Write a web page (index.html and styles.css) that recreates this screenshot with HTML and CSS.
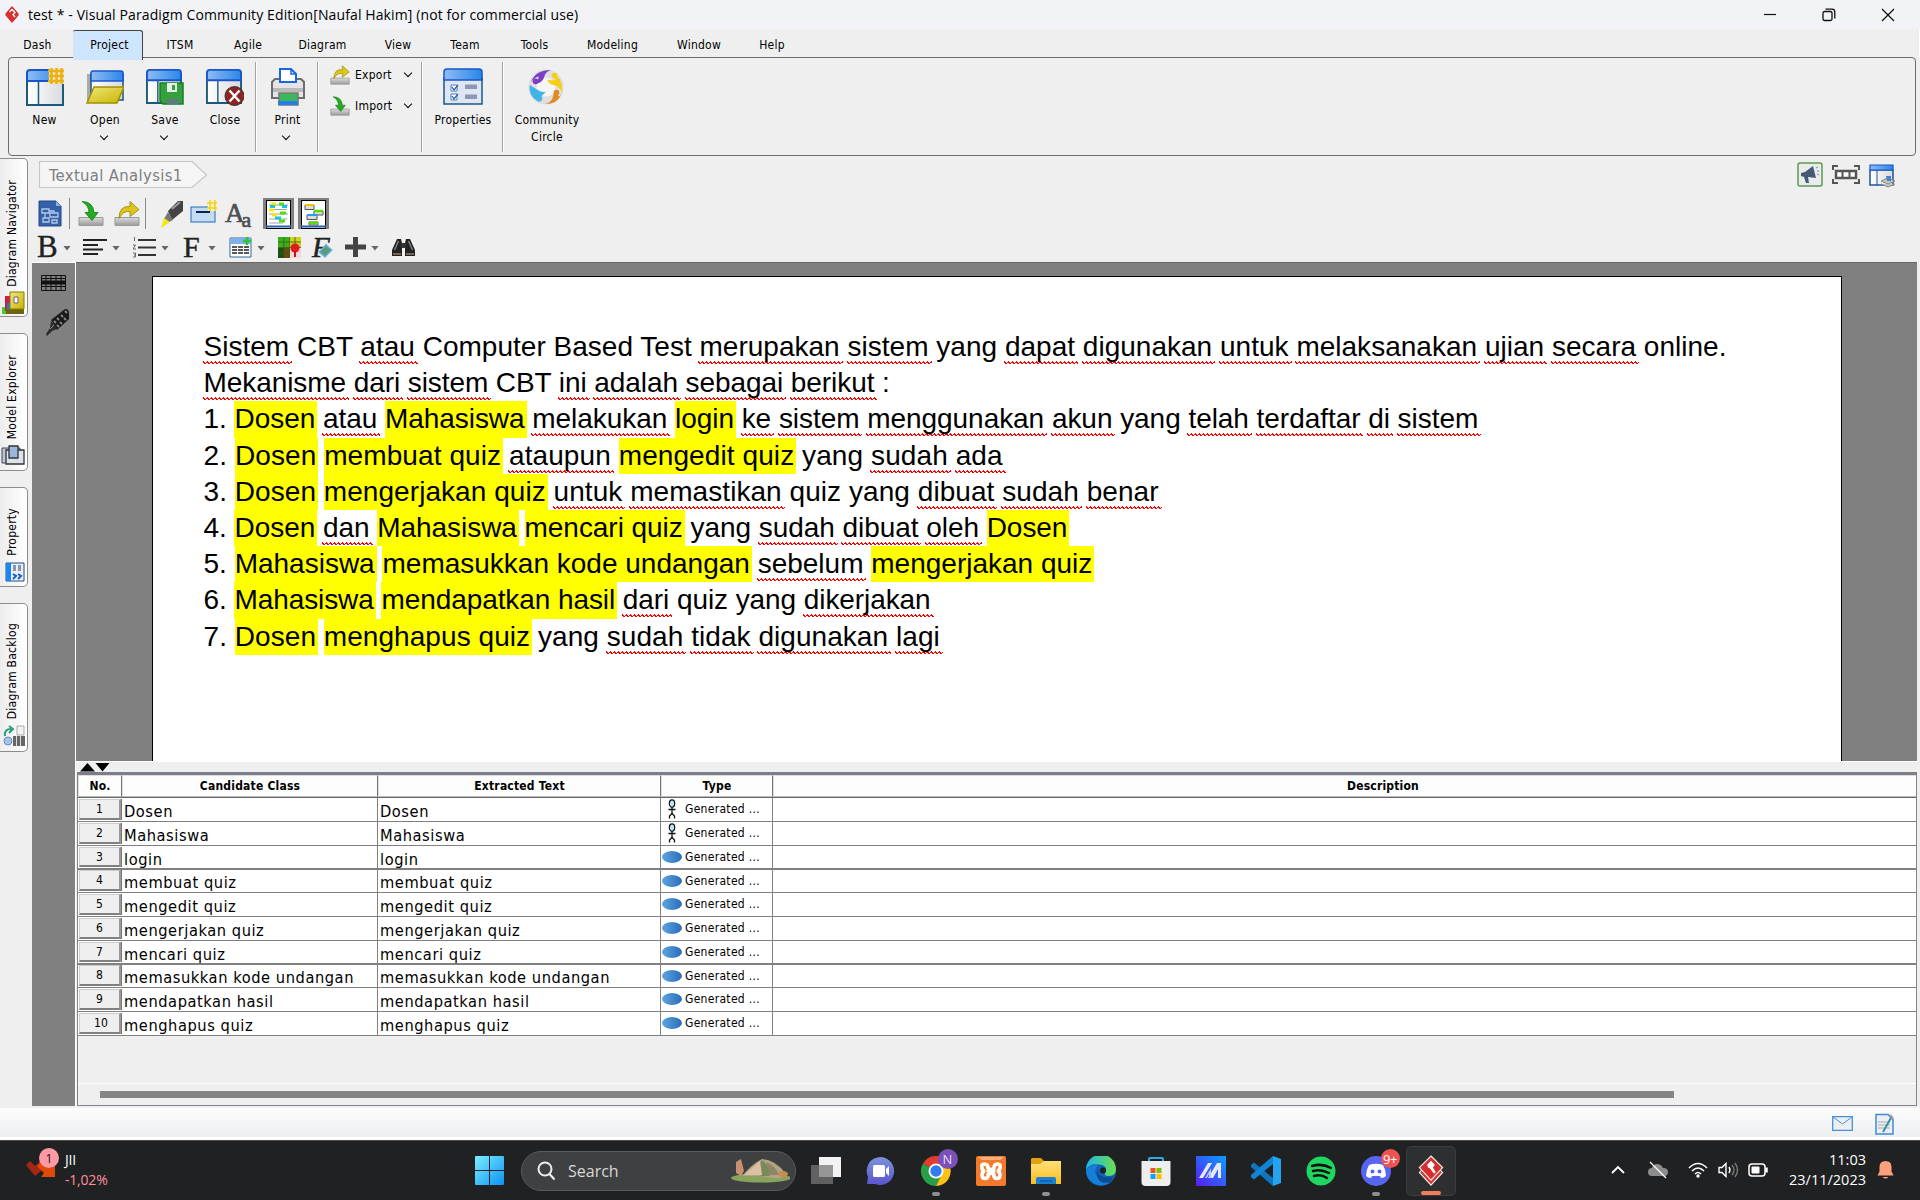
FILE: index.html
```html
<!DOCTYPE html>
<html lang="en">
<head>
<meta charset="utf-8">
<title>test * - Visual Paradigm Community Edition</title>
<link rel="stylesheet" href="styles.css">
</head>
<body>
<svg class="defs" width="0" height="0" aria-hidden="true">
  <defs>
    <linearGradient id="blueBar" x1="0" y1="0" x2="1" y2="0"><stop offset="0" stop-color="#8fbcf3"/><stop offset="1" stop-color="#2a86ea"/></linearGradient>
    <linearGradient id="paper" x1="0" y1="0" x2="1" y2="0"><stop offset="0" stop-color="#fff"/><stop offset="1" stop-color="#d9dadf"/></linearGradient>
    <linearGradient id="gold" x1="0" y1="0" x2="1" y2="1"><stop offset="0" stop-color="#f0e67c"/><stop offset="1" stop-color="#c9b400"/></linearGradient>
    <linearGradient id="tray" x1="0" y1="0" x2="0" y2="1"><stop offset="0" stop-color="#ddd"/><stop offset="1" stop-color="#999"/></linearGradient>
    <linearGradient id="oval" x1="0" y1="0" x2="1" y2="0"><stop offset="0" stop-color="#5ea4e0"/><stop offset="1" stop-color="#2a6db8"/></linearGradient>
    <linearGradient id="win" x1="0" y1="0" x2="1" y2="1"><stop offset="0" stop-color="#7ceeff"/><stop offset="1" stop-color="#0a92f5"/></linearGradient>
    <linearGradient id="edge" x1="0" y1="0" x2="1" y2="0"><stop offset="0" stop-color="#1fb4e6"/><stop offset="1" stop-color="#6be04c"/></linearGradient>
    <linearGradient id="asus" x1="1" y1="0" x2="0" y2="1"><stop offset="0" stop-color="#0aa0ff"/><stop offset="1" stop-color="#5a1bf5"/></linearGradient>
    <linearGradient id="chat" x1="0" y1="0" x2="0" y2="1"><stop offset="0" stop-color="#7d92dc"/><stop offset="1" stop-color="#5a55cf"/></linearGradient>
    <linearGradient id="folder" x1="0" y1="0" x2="0" y2="1"><stop offset="0" stop-color="#ffe07a"/><stop offset="1" stop-color="#fbbd1c"/></linearGradient>
    <symbol id="window" viewBox="0 0 38 38"><path d="M1 12h36v25H1z" fill="url(#paper)" stroke="#1a5a78" stroke-width="2"/><path d="M12.500 12v25" stroke="#1a5a78" stroke-width="1.500"/><path d="M1 13V5q0-3 3-3h30q3 0 3 3v8z" fill="url(#blueBar)" stroke="#1a55c8" stroke-width="2"/></symbol>
    <symbol id="importIcon" viewBox="0 0 26 26"><path d="M1 17h24v8H1z" fill="url(#tray)" stroke="#999"/><path d="M4 1q11 0 12 11h4l-6 8-7-8h4Q11 5 4 1z" fill="#25ad22" stroke="#167a14" stroke-width=".8"/></symbol>
    <symbol id="exportIcon" viewBox="0 0 26 26"><path d="M1 17h24v8H1z" fill="url(#tray)" stroke="#999"/><path d="M5 18Q5 5 16 6V1l9 8-9 7v-5q-7-1-11 7z" fill="#dcc51c" stroke="#9a8500" stroke-width=".8"/></symbol>
    <symbol id="actor" viewBox="0 0 10 20"><ellipse cx="5" cy="4.500" rx="2.700" ry="3.700" fill="#bfe6f5" stroke="#111" stroke-width="1.200"/><path d="M5 8v6.500M1.500 10.500h7M5 14.500l-2.500 2.500v2.500M5 14.500L7.500 17v2.500" fill="none" stroke="#111" stroke-width="1.300"/></symbol>
    <symbol id="usecase" viewBox="0 0 20 12"><ellipse cx="10" cy="6" rx="10" ry="6" fill="url(#oval)"/></symbol>
    <symbol id="vp" viewBox="0 0 26 32"><path d="M13 6l12 12-12 13L1 18z" fill="#d33" stroke="#eee" stroke-width="1.200"/><path d="M13 1l12 12-12 13L1 13z" fill="#d32f2f" stroke="#eee" stroke-width="1.200"/><path d="M9 10l4-4 4 4-2 3 3 5-2 1-4-5-2-1z" fill="#fff"/></symbol>
  </defs>
</svg>

<header class="titlebar">
  <svg class="app-icon" viewBox="0 0 14 17" width="14" height="17"><path d="M7 0l6.500 7.500v2L7 17 .5 9.500v-2z" fill="#d63030"/><path d="M4.500 6L7 3.500 10 6.500 8 8.500l2 2.500" fill="none" stroke="#fff" stroke-width="1.300"/></svg>
  <h1 class="app-title">test * - Visual Paradigm Community Edition[Naufal Hakim] (not for commercial use)</h1>
  <div class="window-buttons">
    <svg width="14" height="14" viewBox="0 0 14 14"><path d="M1 6.500h12" stroke="#111" stroke-width="1.200"/></svg>
    <svg width="14" height="14" viewBox="0 0 14 14" fill="none" stroke="#111" stroke-width="1.300"><rect x="1" y="3.500" width="9" height="9" rx="1.500"/><path d="M3.500 1.200H10q2.800 0 2.800 2.800v6.500"/></svg>
    <svg width="14" height="14" viewBox="0 0 14 14"><path d="M1 1l12 12M13 1L1 13" stroke="#111" stroke-width="1.300"/></svg>
  </div>
</header>

<nav class="menu">
  <span>Dash</span><span class="active">Project</span><span>ITSM</span><span>Agile</span><span>Diagram</span><span>View</span><span>Team</span><span>Tools</span><span>Modeling</span><span>Window</span><span>Help</span>
</nav>

<section class="ribbon">
  <div class="tool tool-new">
    <svg width="38" height="38" viewBox="0 0 38 38"><use href="#window" width="38" height="38"/><path d="M23 0h15v16H23z" fill="#f6e9b8"/><path d="M25.500 0v16M30.500 0v16M35.500 0v16M22 3h16M22 8h16M22 13h16" stroke="#eab01c" stroke-width="2.500"/></svg>
    <span>New</span>
  </div>
  <div class="tool">
    <svg width="38" height="38" viewBox="0 0 38 38"><path d="M1 6h4v28H1z" fill="#aaa"/><path d="M5 6h32v26H5z" fill="url(#paper)" stroke="#1a5a78" stroke-width="1.500"/><path d="M5 13V5q0-2 2-2h28q2 0 2 2v8z" fill="url(#blueBar)" stroke="#1a55c8" stroke-width="1.500"/><path d="M8 19h30l-7 16H1z" fill="url(#gold)" stroke="#a09000" stroke-width="1.500"/></svg>
    <span>Open</span><i class="chevron"></i>
  </div>
  <div class="tool">
    <svg width="38" height="38" viewBox="0 0 38 38"><use href="#window" width="36" height="36"/><path d="M14 15h23v21H17l-3-3z" fill="#35a03e" stroke="#12801f" stroke-width="1.500"/><path d="M21 15h10v9H21z" fill="#e6f3e6"/><path d="M26 17h3v5h-3z" fill="#35a03e"/><path d="M21 31h12v5H21z" fill="#5d7a80"/></svg>
    <span>Save</span><i class="chevron"></i>
  </div>
  <div class="tool">
    <svg width="38" height="38" viewBox="0 0 38 38"><use href="#window" width="36" height="36"/><circle cx="28.500" cy="28" r="9.500" fill="#8c2424" stroke="#333" stroke-width="1"/><path d="M23.500 22.500l10 11M33.500 22.500l-10 11" stroke="#fff" stroke-width="2.500"/></svg>
    <span>Close</span>
  </div>
  <i class="divider"></i>
  <div class="tool">
    <svg width="36" height="38" viewBox="0 0 36 38"><path d="M2 14l3-3h26l3 3v16H2z" fill="#e4e4e6" stroke="#6d6d70" stroke-width="2"/><path d="M3 20h30v4H3z" fill="#b9b9b9"/><path d="M10 14V1h11l5 5v8z" fill="#fff" stroke="#1a66e0" stroke-width="2"/><path d="M21 1v5h5" fill="none" stroke="#1a66e0" stroke-width="1.500"/><path d="M9 25h19v12H9z" fill="#3cb85a" stroke="#777" stroke-width="1.500"/><path d="M8 33h20v4H8z" fill="#2a7be8"/></svg>
    <span>Print</span><i class="chevron"></i>
  </div>
  <i class="divider"></i>
  <div class="tool-pair">
    <div><svg width="20" height="20"><use href="#exportIcon" width="20" height="20"/></svg><span>Export</span><i class="chevron"></i></div>
    <div><svg width="20" height="20"><use href="#importIcon" width="20" height="20"/></svg><span>Import</span><i class="chevron"></i></div>
  </div>
  <i class="divider"></i>
  <div class="tool tool-props">
    <svg width="40" height="38" viewBox="0 0 40 38"><path d="M1 10h38v26H1z" fill="#dfe6f3" stroke="#1a5a88" stroke-width="1.500"/><path d="M1 12V4q0-3 3-3h32q3 0 3 3v8z" fill="url(#blueBar)" stroke="#1a55c8" stroke-width="1.500"/><path d="M8 17h6v6H8zM8 26h6v6H8z" fill="#fff" stroke="#4a80c8"/><path d="M9 19l2 3 4-5M9 28l2 3 4-5" fill="none" stroke="#335f9c" stroke-width="1.300"/><path d="M22 16.500h12v4.500H22zM22 26.500h12V31H22z" fill="#8b97b5"/></svg>
    <span>Properties</span>
  </div>
  <i class="divider"></i>
  <div class="tool tool-community">
    <svg width="38" height="38" viewBox="0 0 38 40"><circle cx="19" cy="20" r="18.500" fill="#dfdfdf"/><circle cx="19" cy="20" r="10" fill="#f6f6f6"/><path d="M3 15Q8 2 24 2q-6 2-7 8-3 7-9 6 4-4 3-7-4 1-8 6z" fill="#7a3fc4"/><circle cx="8" cy="14" r="3" fill="#7a3fc4"/><path d="M24 6q13 2 12 20-3-7-9-8-5-1-7-6 7 2 9 0 0-3-5-6z" fill="#f5cf14"/><circle cx="28" cy="8" r="3" fill="#f5cf14"/><path d="M35 28q-4 10-17 10 8-3 8-7 1-6 6-7-1 5 0 6 1 0 3-2z" fill="#e08a22"/><circle cx="30" cy="26" r="3" fill="#e08a22"/><path d="M2 18q-2 12 10 18-2-4 3-7l4-4q-6 1-9-2-5-3-8-5z" fill="#41b4e6"/><circle cx="12" cy="32" r="3" fill="#41b4e6"/></svg>
    <span>Community<br>Circle</span>
  </div>
</section>

<main class="workspace">
  <aside class="side-tabs">
    <div class="side-tab navigator"><span>Diagram Navigator</span>
      <svg width="24" height="24" viewBox="0 0 24 24"><path d="M1 16h5v7H1z" fill="#3fd02c"/><path d="M4 5h6v15H4z" fill="#d11b4a"/><path d="M6 12h4v9H6z" fill="#1f7bd0"/><path d="M5 18h18v5H5z" fill="#6f6410"/><path d="M9 1h14v17H9z" fill="url(#gold)" stroke="#8c7c00"/><path d="M13 6h4v6h-4z" fill="#fff" stroke="#668"/></svg></div>
    <div class="side-tab explorer"><span>Model Explorer</span>
      <svg width="24" height="20" viewBox="0 0 24 20"><path d="M1 3h18v15H1z" fill="#b9c6d6" stroke="#445"/><path d="M5 5h18v14H5z" fill="#dde3ea" stroke="#333" stroke-width="1.300"/><path d="M8 1h9v12H8z" fill="#9bb7de" stroke="#333" stroke-width="1.300"/></svg></div>
    <div class="side-tab property"><span>Property</span>
      <svg width="20" height="20" viewBox="0 0 20 20"><path d="M1 1h18v18H1z" fill="#e9eef6" stroke="#234a8a"/><path d="M1 1h5v18H1z" fill="#1e86f0"/><path d="M8 3h3v6H8zM13 3h3v6h-3z" fill="#8b97a8"/><path d="M8 12l3 2-3 3M13 12l3 2-3 3" fill="none" stroke="#1a5fc0" stroke-width="2"/></svg></div>
    <div class="side-tab backlog"><span>Diagram Backlog</span>
      <svg width="22" height="22" viewBox="0 0 22 22"><path d="M14 1h7v9h-7z" fill="#f2f2f2" stroke="#aaa"/><path d="M10 11h12v10H10z" fill="#666"/><path d="M13.500 11v10M17.500 11v10" stroke="#ddd"/><circle cx="5" cy="16" r="4" fill="#a9c2e8" stroke="#6a8cc0"/><path d="M2 11q-1-7 6-7M6 1l4 3-4 4" fill="none" stroke="#2a9d80" stroke-width="2"/></svg></div>
  </aside>

  <div class="editor">
    <div class="crumbs">
      <div class="crumb"><svg width="169" height="28" viewBox="0 0 169 28"><path d="M.5.500H153l14.500 13.500L153 26.500H.5z" fill="#f5f5f5" stroke="#c4c6c9" stroke-width="1.200"/></svg><span>Textual Analysis1</span></div>
      <div class="crumb-actions">
        <svg width="26" height="26" viewBox="0 0 26 26"><rect x="1" y="1" width="24" height="23" rx="2" fill="#e9ebec" stroke="#5a9c50" stroke-width="1.500"/><path d="M4 11l4-1 8-6 3 12-8-1 1 6h-3l-2-6-3-1z" fill="#465a78"/><path d="M19 6l2-1M20 9h2M20 12l2 1" stroke="#889"/></svg>
        <svg width="28" height="26" viewBox="0 0 28 26" fill="none" stroke="#555"><path d="M1 8V4h5M22 4h5v4M1 17v4h5M22 21h5v-4" stroke-width="2"/><path d="M4 9h20v7H4z" stroke-width="2.500" fill="#fff"/><path d="M10.500 9v7M17.500 9v7" stroke-width="2"/></svg>
        <svg width="27" height="26" viewBox="0 0 27 26"><path d="M1 8h23v15H1z" fill="url(#paper)" stroke="#1a5a98" stroke-width="1.500"/><path d="M8 8v15" stroke="#1a5a98"/><path d="M1 3h23v5H1z" fill="url(#blueBar)" stroke="#1a55c8" stroke-width="1.200"/><path d="M12 19l7 3 7-3-7-3zM12 22l7 3 7-3" fill="#c4c6ca" stroke="#888"/><path d="M17 14h5v5h-4z" fill="#4a80c8"/></svg>
      </div>
    </div>

    <div class="toolbar first">
      <svg class="i-doc" width="24" height="28" viewBox="0 0 24 28"><path d="M1 1h17l5 5v20H1z" fill="#3460a8" stroke="#22488a"/><path d="M18 1v5h5" fill="#8fb0e0"/><path d="M4 9h7v4H4zM12 13h8v4h-8zM5 18h6v4H5zM14 20h5v3h-5zM7 13v5M11 11h5v2" fill="none" stroke="#b4c9ea" stroke-width="1.300"/></svg>
      <i class="divider"></i>
      <svg class="i-import" width="26" height="27"><use href="#importIcon" width="26" height="27"/></svg>
      <svg class="i-export" width="26" height="27"><use href="#exportIcon" width="26" height="27"/></svg>
      <i class="divider"></i>
      <svg class="i-marker" width="23" height="28" viewBox="0 0 23 28"><path d="M8 11L18 1h5v10L12 20z" fill="#444"/><path d="M12 9l8-7" stroke="#999" stroke-width="2"/><path d="M8 12l5 8-6 3-3-4z" fill="#777"/><path d="M4 18l6 4-9 6z" fill="#f0e810"/></svg>
      <svg class="i-newbox" width="27" height="28" viewBox="0 0 27 28"><rect x="1" y="7" width="24" height="15" fill="#c4dbf5" stroke="#3f7cc4" stroke-width="1.200"/><path d="M6 12h14" stroke="#124" stroke-width="2"/><path d="M18 1h9v10h-9z" fill="#fff3a8"/><path d="M20 0v11M25 0v11M17 3h10M17 8h10" stroke="#f0cf30" stroke-width="1.500"/></svg>
      <span class="i-aa">A<small>a</small></span>
      <div class="toggle"><svg width="25" height="29" viewBox="0 0 25 29"><path d="M0 0h25v29H0z" fill="#fff" stroke="#000" stroke-width="2"/><path d="M3 5h19M3 9.500h18M3 14h19M3 19h18M3 23h14" stroke="#9da2b0" stroke-width="1.200"/><path d="M5 4h5M3 10h5M6 15h5" stroke="#ffe600" stroke-width="3"/><path d="M13 4h5M14 13h6M13 21h6" stroke="#50e000" stroke-width="3"/><path d="M4 6.500h5M16 6.500h5M9 18h6" stroke="#18c0f0" stroke-width="3"/><path d="M0 26.500h25" stroke="#2a5fb0" stroke-width="2"/></svg></div>
      <div class="toggle"><svg width="25" height="29" viewBox="0 0 25 29"><path d="M0 0h25v29H0z" fill="#fff" stroke="#000" stroke-width="2"/><path d="M4 5h9v4.500H4zM13 11h9v4h-9zM6 15h10v4.500H6zM8 22h9v3H8z" fill="#ddd" stroke="#555"/><path d="M4 5h9" stroke="#f0c000" stroke-width="2"/><path d="M13 11h9M8 23h9" stroke="#50e000" stroke-width="2.500"/><path d="M6 15h10" stroke="#2a9cf0" stroke-width="2"/><path d="M0 26.500h25" stroke="#2a5fb0" stroke-width="2"/></svg></div>
    </div>

    <div class="toolbar second">
      <b class="glyph bold-b">B</b><i class="drop"></i>
      <svg class="i-align" width="24" height="20" viewBox="0 0 24 20"><path d="M0 3h24M0 8h15M0 12.500h20M0 17h15" stroke="#222" stroke-width="1.800"/></svg><i class="drop"></i>
      <svg class="i-list" width="23" height="22" viewBox="0 0 23 22"><path d="M5 4h18M5 11.500h18M5 19h18" stroke="#333" stroke-width="1.800"/><path d="M1.500 1v4M0 9h2.500L0 13h3M0 17h2.500v4H0M1 19h2" stroke="#666" fill="none"/></svg><i class="drop"></i>
      <b class="glyph letter-f">F</b><i class="drop"></i>
      <svg class="i-table" width="23" height="21" viewBox="0 0 23 21"><path d="M1 1h21v19H1z" fill="#fff" stroke="#2f6c9c"/><path d="M1 1h21v6H1z" fill="#7fb0ea"/><path d="M3 10h5M9 10h5M15 10h5M3 13h5M9 13h5M15 13h5M3 16h5M9 16h5M15 16h5" stroke="#222" stroke-width="1.600"/><path d="M18 0v8M14 4h8" stroke="#2fc43a" stroke-width="2.500"/></svg><i class="drop"></i>
      <svg class="i-grid" width="23" height="21" viewBox="0 0 23 21"><path d="M0 0h23v21H0z" fill="#38b01c"/><path d="M11 0h12v11H11z" fill="#cfd21c"/><path d="M0 11h6v10H0z" fill="#1f4c10"/><path d="M6 11h6v10H6z" fill="#6b4a10"/><path d="M5.800 0v21M11.500 0v21M17 0v21M0 5h23M0 10.500h23M0 16h23" stroke="#3a5a18" stroke-width=".8"/><path d="M12 11h11v10H12z" fill="#f3dada"/><circle cx="17" cy="11" r="4.500" fill="#dd1c1c"/><path d="M17 14v6" stroke="#c01818" stroke-width="2"/></svg>
      <div class="i-eraser"><i>F</i><svg width="15" height="14" viewBox="0 0 15 14"><path d="M1 8l7-7 6 5-7 7z" fill="#5b9a7c" stroke="#6fb6e6" stroke-width="1.300"/></svg></div>
      <svg class="i-plus" width="21" height="20" viewBox="0 0 21 20"><path d="M8 0h5v7.500h8v5h-8V20H8v-7.500H0v-5h8z" fill="#444"/></svg><i class="drop"></i>
      <svg class="i-bino" width="23" height="20" viewBox="0 0 23 20"><path d="M0 19V13L5 2h4l1 4v13zM23 19V13L18 2h-4l-1 4v13z" fill="#222"/><path d="M9 6h5v5H9z" fill="#333"/><path d="M2.500 13l4-9M20.500 13l-4-9" stroke="#888" stroke-width="1.300"/><path d="M1 17h8M14 17h8" stroke="#c8a888"/></svg>
    </div>

    <div class="stage">
      <div class="palette">
        <svg width="25" height="16" viewBox="0 0 25 16"><path d="M.5.500h24v15H.5zM5 .5v15M10 .5v15M15 .5v15M20 .5v15M.5 3.500h24M.5 11.500h24" fill="none" stroke="#111"/><path d="M0 5.500h25v4H0z" fill="#111"/></svg>
        <svg width="25" height="28" viewBox="0 0 25 28"><path d="M6 12L20 1q4 0 4 4v6L12 22z" fill="#1a1a1a"/><path d="M9 13l2 2M12 10l2 2M16 7l2 2M20 3l2 2M12 17l2 2M15 14l2 2M19 10l2 2" stroke="#888" stroke-width="1.800"/><path d="M6 13l6 8-5 2-5 5-1-2 4-6z" fill="#2c2c2c"/><path d="M5 21l4-4" stroke="#888"/></svg>
      </div>
      <div class="stage-main">
        <div class="canvas">
          <article class="page">
            <p class="ls-d"><u>Sistem</u> CBT <u>atau</u> Computer Based Test <u>merupakan</u> <u>sistem</u> yang <u>dapat</u> <u>digunakan</u> <u>untuk</u> <u>melaksanakan</u> <u>ujian</u> <u>secara</u> online.</p>
            <p class="ls-b"><u>Mekanisme</u> <u>dari</u> <u>sistem</u> CBT <u>ini</u> <u>adalah</u> <u>sebagai</u> <u>berikut</u> :</p>
            <p class="ls-a">1. <mark>Dosen</mark> <u>atau</u> <mark>Mahasiswa</mark> <u>melakukan</u> <mark>login</mark> <u>ke</u> <u>sistem</u> <u>menggunakan</u> <u>akun</u> yang <u>telah</u> <u>terdaftar</u> <u>di</u> <u>sistem</u></p>
            <p class="ls-c">2. <mark>Dosen</mark> <mark>membuat quiz</mark> <u>ataupun</u> <mark>mengedit quiz</mark> yang <u>sudah</u> <u>ada</u></p>
            <p class="ls-e">3. <mark>Dosen</mark> <mark>mengerjakan quiz</mark> <u>untuk</u> <u>memastikan</u> quiz yang <u>dibuat</u> <u>sudah</u> <u>benar</u></p>
            <p class="ls-a">4. <mark>Dosen</mark> <u>dan</u> <mark>Mahasiswa</mark> <mark>mencari quiz</mark> yang <u>sudah</u> <u>dibuat</u> <u>oleh</u> <mark>Dosen</mark></p>
            <p>5. <mark>Mahasiswa</mark> <mark>memasukkan kode undangan</mark> <u>sebelum</u> <mark>mengerjakan quiz</mark></p>
            <p class="ls-b">6. <mark>Mahasiswa</mark> <mark>mendapatkan hasil</mark> <u>dari</u> quiz yang <u>dikerjakan</u></p>
            <p class="ls-e">7. <mark>Dosen</mark> <mark>menghapus quiz</mark> yang <u>sudah</u> <u>tidak</u> <u>digunakan</u> <u>lagi</u></p>
          </article>
        </div>
        <div class="splitter"><svg width="30" height="9" viewBox="0 0 30 9"><path d="M0 8.500L7.500 0 15 8.500zM15.500 0h14L22.500 8.500z" fill="#000"/></svg></div>
        <div class="grid">
          <div class="row head"><span>No.</span><span>Candidate Class</span><span>Extracted Text</span><span>Type</span><span>Description</span></div>
          <div class="row"><b>1</b><span>Dosen</span><span>Dosen</span><span class="type"><svg class="person" width="10" height="20"><use href="#actor"/></svg>Generated ...</span><span></span></div>
          <div class="row"><b>2</b><span>Mahasiswa</span><span>Mahasiswa</span><span class="type"><svg class="person" width="10" height="20"><use href="#actor"/></svg>Generated ...</span><span></span></div>
          <div class="row thick"><b>3</b><span>login</span><span>login</span><span class="type"><svg width="20" height="12"><use href="#usecase"/></svg>Generated ...</span><span></span></div>
          <div class="row"><b>4</b><span>membuat quiz</span><span>membuat quiz</span><span class="type"><svg width="20" height="12"><use href="#usecase"/></svg>Generated ...</span><span></span></div>
          <div class="row"><b>5</b><span>mengedit quiz</span><span>mengedit quiz</span><span class="type"><svg width="20" height="12"><use href="#usecase"/></svg>Generated ...</span><span></span></div>
          <div class="row"><b>6</b><span>mengerjakan quiz</span><span>mengerjakan quiz</span><span class="type"><svg width="20" height="12"><use href="#usecase"/></svg>Generated ...</span><span></span></div>
          <div class="row thick"><b>7</b><span>mencari quiz</span><span>mencari quiz</span><span class="type"><svg width="20" height="12"><use href="#usecase"/></svg>Generated ...</span><span></span></div>
          <div class="row"><b>8</b><span>memasukkan kode undangan</span><span>memasukkan kode undangan</span><span class="type"><svg width="20" height="12"><use href="#usecase"/></svg>Generated ...</span><span></span></div>
          <div class="row"><b>9</b><span>mendapatkan hasil</span><span>mendapatkan hasil</span><span class="type"><svg width="20" height="12"><use href="#usecase"/></svg>Generated ...</span><span></span></div>
          <div class="row"><b class="wide">10</b><span>menghapus quiz</span><span>menghapus quiz</span><span class="type"><svg width="20" height="12"><use href="#usecase"/></svg>Generated ...</span><span></span></div>
          <div class="scroll"><i></i></div>
        </div>
      </div>
    </div>
  </div>
</main>

<footer class="status">
  <svg width="21" height="15" viewBox="0 0 21 15"><path d="M.7.700h19.600v13.600H.7z" fill="#eceef1" stroke="#4a90d9" stroke-width="1.300"/><path d="M1 1l9.500 7L20 1" fill="none" stroke="#4a90d9"/></svg>
  <svg width="19" height="22" viewBox="0 0 19 22"><path d="M1 1.500h12l5 5V21H1z" fill="#eceef1" stroke="#3f8cd8" stroke-width="1.500"/><path d="M3 9h12M3 12h12M3 15h12" stroke="#aaa"/><path d="M17 3L8 19" stroke="#2a8ca0" stroke-width="1.800"/><path d="M16 1v4h3" fill="none" stroke="#d88"/></svg>
</footer>

<footer class="taskbar">
  <div class="widget">
    <div class="widget-icon"><svg width="30" height="18" viewBox="0 0 30 18"><path d="M0 5l4-4 5 5 6-6 6 6-12 10z" fill="#a32814"/><path d="M15 17h14V4l-4 4-8-8-6 6 7 7z" fill="#e14a0a"/></svg><span class="badge pink">1</span></div>
    <div class="widget-text"><span>JII</span><span class="loss">-1,02%</span></div>
  </div>
  <svg class="start" width="29" height="29" viewBox="0 0 29 29"><path d="M0 1q0-1 1-1h13v14H0zM15 0h13q1 0 1 1v13H15zM0 15h14v14H1q-1 0-1-1zM15 15h14v13q0 1-1 1H15z" fill="url(#win)"/></svg>
  <div class="search">
    <svg width="19" height="20" viewBox="0 0 19 20"><circle cx="8" cy="8" r="6.500" fill="none" stroke="#eee" stroke-width="2"/><path d="M12.500 13l5 5.500" stroke="#eee" stroke-width="2.200"/></svg>
    <span>Search</span>
    <svg class="art" width="60" height="25" viewBox="0 0 60 25"><ellipse cx="31" cy="20" rx="30" ry="4.500" fill="#8aa35a"/><path d="M12 18Q22 6 32 1q14 1 24 15-3 5-12 4L30 18z" fill="#b5a384"/><path d="M32 2q8 6 8 16h-9L28 8z" fill="#7a8a5a"/><path d="M36 4q10 4 13 13h-9z" fill="#8f8668"/><path d="M6 4l5-3 3 12-3 5-5-3z" fill="#c98f70"/><path d="M14 17L30 3l2 14z" fill="#dcc0a4"/><ellipse cx="53" cy="16" rx="5" ry="3" fill="#c88a50"/></svg>
  </div>
  <div class="apps">
    <div class="app"><svg width="30" height="30" viewBox="0 0 30 30"><path d="M8 1h22v20H8z" fill="#f2f2f2"/><path d="M0 9h22v19H0z" fill="#777" fill-opacity=".75"/></svg></div>
    <div class="app"><svg width="30" height="30" viewBox="0 0 30 30"><path d="M15 1a14 14 0 1 1-6 27H1l1-7A14 14 0 0 1 15 1z" fill="url(#chat)"/><rect x="7" y="9" width="12" height="12" rx="1.500" fill="#fff"/><path d="M20 13l3-3v10l-3-3z" fill="#fff"/></svg></div>
    <div class="app running"><svg width="30" height="30" viewBox="0 0 30 30"><path d="M15 15L2 7.500A15 15 0 0 1 28 7.500z" fill="#e33b2e"/><path d="M15 15L2 7.500A15 15 0 0 0 15 30l6-11z" fill="#2a9f4a"/><path d="M15 8h13a15 15 0 0 1-13 22l6-12z" fill="#fbc116"/><circle cx="15" cy="15" r="7.500" fill="#fff"/><circle cx="15" cy="15" r="5.700" fill="#2f7cf0"/></svg><span class="badge purple">N</span></div>
    <div class="app"><svg width="30" height="30" viewBox="0 0 30 30"><rect width="30" height="30" rx="2" fill="#f37a2a"/><path d="M2 1h26l-4 3H6z" fill="#f8b080"/><path d="M12 15H18M12 12q0-4-3.500-4T6 11.500q0 3 3 3.500-3 .5-3 4Q6 22.500 9 22.500t3.500-4M18 12q0-4 3.500-4t2.500 3.500q0 3-3 3.500 3 .5 3 4 0 3.500-3 3.500t-3.500-4M12 12q3 3 6 0M12 18.500q3-3 6 0" fill="none" stroke="#fff" stroke-width="3.600" stroke-linecap="round"/></svg></div>
    <div class="app running"><svg width="30" height="30" viewBox="0 0 30 30"><path d="M0 10V3l1-1h9l3 3v5z" fill="#e0a010"/><path d="M0 8h9l4-3h17v23H0z" fill="url(#folder)"/><path d="M5 28v-5q0-2 2-2h16q2 0 2 2v5z" fill="#1a80d2"/><path d="M9 25h12" stroke="#0c4f90"/></svg></div>
    <div class="app"><svg width="30" height="30" viewBox="0 0 30 30"><circle cx="15" cy="15" r="15" fill="#0f62b8"/><path d="M0 14A15 15 0 0 1 30 13q0 7-7 7-5 0-4-3 3-6-3-8Q4 6 0 14z" fill="url(#edge)"/><path d="M0 15Q3 8 12 9q-5 5-1 12 3 5 12 6A15 15 0 0 1 0 15z" fill="#1680d8"/><path d="M14 12q-4 4 1 8 5 3 13 0l-3 5Q14 30 11 20q-1-5 3-8z" fill="#0d4a94"/><circle cx="17" cy="14.500" r="3" fill="#202122"/></svg></div>
    <div class="app"><svg width="30" height="30" viewBox="0 0 30 30"><path d="M8 6V2.500Q8 2 9 2h12q1 0 1 1v3" fill="none" stroke="#27aee8" stroke-width="2"/><path d="M.5 5h29v21q0 4-4 4h-21q-4 0-4-4z" fill="#eee"/><path d="M9.500 12h5v5h-5z" fill="#f1511b"/><path d="M15.500 12h5v5h-5z" fill="#80bc06"/><path d="M9.500 18h5v5h-5z" fill="#05a6f0"/><path d="M15.500 18h5v5h-5z" fill="#ffba08"/></svg></div>
    <div class="app"><svg width="30" height="30" viewBox="0 0 30 30"><path d="M0 0h30v30H0z" fill="url(#asus)"/><path d="M3 22L12 7h4L7 22zM12 22L21 7h4v15h-3V13l-5 9z" fill="#e6e8ff"/><path d="M9 22l6-10v10h-2v-4l-2 4z" fill="#b9c4ff"/></svg></div>
    <div class="app"><svg width="30" height="30" viewBox="0 0 30 30"><path d="M22 0l8 3v24l-8 3z" fill="#26a3ee"/><path d="M0 9l3-2.500L22 22v8L0 11z" fill="#0d76c0"/><path d="M0 21l3 2.500L22 8V0L0 19z" fill="#1285d2"/></svg></div>
    <div class="app"><svg width="30" height="30" viewBox="0 0 30 30"><circle cx="15" cy="15" r="14.500" fill="#1ed760"/><path d="M6 10q10-3 19 2M7 15q8-2 16 2M8 20q7-2 13 2" fill="none" stroke="#111" stroke-width="2.500" stroke-linecap="round"/></svg></div>
    <div class="app running"><svg width="30" height="30" viewBox="0 0 30 30"><circle cx="15" cy="15" r="15" fill="#5865f2"/><path d="M8 9q7-2.500 14 0 3 5 3 11-2 2-5 2l-1-2h-8l-1 2q-3 0-5-2 0-6 3-11z" fill="#fff"/><circle cx="11.500" cy="15.500" r="2" fill="#5865f2"/><circle cx="18.500" cy="15.500" r="2" fill="#5865f2"/></svg><span class="badge red">9+</span></div>
    <div class="app current"><svg width="26" height="31"><use href="#vp" width="26" height="31"/></svg></div>
  </div>
  <div class="tray">
    <svg class="t-up" width="14" height="10" viewBox="0 0 14 10"><path d="M1 8l6-6 6 6" fill="none" stroke="#fff" stroke-width="1.800"/></svg>
    <svg class="t-cloud" width="20" height="18" viewBox="0 0 20 18"><path d="M4 15q-4 0-4-4t4-4q1-4 5-4t6 4q5 0 5 4t-4 4z" fill="#8d8d8d"/><path d="M2 1l16 16" stroke="#fff" stroke-width="1.300"/></svg>
    <svg class="t-wifi" width="20" height="16" viewBox="0 0 20 16"><path d="M1 6q9-9 18 0M4 9q6-6 12 0M7 12q3-3 6 0" fill="none" stroke="#fff" stroke-width="1.600"/><circle cx="10" cy="14" r="1.700" fill="#fff"/></svg>
    <svg class="t-sound" width="21" height="16" viewBox="0 0 21 16" fill="none"><path d="M1 5.500h3l4-4v13l-4-4H1z" stroke="#fff" stroke-width="1.400"/><path d="M11 5q2 3 0 6" stroke="#fff" stroke-width="1.400"/><path d="M14 3q4 5 0 10M17 1q5 7 0 14" stroke="#777" stroke-width="1.400"/></svg>
    <svg class="t-batt" width="21" height="14" viewBox="0 0 21 14"><rect x="1" y="1" width="16" height="12" rx="3" fill="none" stroke="#fff" stroke-width="1.500"/><rect x="3.500" y="3.500" width="8" height="7" rx="1" fill="#fff"/><path d="M18.500 4.500v5" stroke="#fff" stroke-width="2.500"/></svg>
    <div class="clock"><span>11:03</span><span>23/11/2023</span></div>
    <svg class="t-bell" width="17" height="20" viewBox="0 0 17 20"><path d="M.5 15.500l2-4V7q0-6 6-6t6 6v4.500l2 4z" fill="#ffa07c"/><path d="M5.500 17h6q-3 3-6 0z" fill="#ffa07c"/></svg>
  </div>
</footer>
</body>
</html>
```
FILE: styles.css
```css
* { box-sizing: border-box; }

body {
  margin: 0;
  width: 1920px;
  height: 1200px;
  display: flex;
  flex-direction: column;
  overflow: hidden;
  background: #efefef;
  color: #000;
  font: 12px/16px "DejaVu Sans Condensed", "DejaVu Sans", sans-serif;
  letter-spacing: 0.25px;
}

svg { display: block; flex: none; }
.defs { position: absolute; }

/* title bar */
.titlebar {
  height: 29px;
  flex: none;
  display: flex;
  align-items: center;
  padding: 0 25px 0 5px;
  background: #f2f3f7;
}
.app-title {
  margin: 0 0 0 9px;
  flex: 1;
  font: 400 14px/20px "Open Sans", "Noto Sans", sans-serif;
  letter-spacing: 0.11px;
}
.window-buttons { display: flex; gap: 45px; }

/* menu */
.menu {
  height: 29px;
  flex: none;
  display: grid;
  grid-template-columns: 71px 70px 74px 62px 87px 64px 70px 69px 87px 86px 60px;
  padding: 1px 0 0 2px;
  border-right: 1px solid #fff;
}
.menu span { text-align: center; line-height: 30px; }
.menu .active {
  position: relative;
  z-index: 1;
  background: #cde5fd;
  border: 1px solid #444;
  border-width: 1px 1px 0 0;
  border-radius: 2px 3px 0 0;
  padding-left: 4px;
  line-height: 28px;
}

/* ribbon */
.ribbon {
  height: 99px;
  flex: none;
  margin: -1px 4px 0 8px;
  display: flex;
  border: 1px solid #6c6c6c;
  border-radius: 4px;
  padding: 4px 0 3px 5px;
}
.tool {
  width: 60px;
  padding-top: 7px;
  display: flex;
  flex-direction: column;
  align-items: center;
  text-align: center;
}
.tool svg { margin: -1px 0 6px; }
.tool span { line-height: 17px; }
.tool-new { width: 61px; }
.tool-props { width: 79px; }
.tool-community { width: 85px; }
.tool-community svg { margin-left: -2px; }
.divider { flex: none; width: 2px; background: linear-gradient(90deg, #a2a2a2 50%, #fff 50%); }
.divider + .tool { padding-left: 1px; }
.chevron {
  width: 6px;
  height: 6px;
  border: solid #000;
  border-width: 0 1.5px 1.5px 0;
  transform: rotate(45deg);
}
.tool .chevron { margin-top: 4px; margin-right: 3px; }
.tool-pair { width: 102px; padding: 0 0 0 11px; margin-top: -3px; }
.tool-pair div { display: flex; align-items: center; height: 31px; }
.tool-pair span { margin-left: 5px; width: 50px; }
.tool-pair .chevron { margin-top: -3px; }

/* workspace */
.workspace { height: 952px; flex: none; display: flex; padding: 2px 3px 0 0; }
.side-tabs { width: 32px; flex: none; }
.side-tab {
  width: 28px;
  margin-bottom: 16px;
  padding-right: 2px;
  display: flex;
  flex-direction: column;
  align-items: flex-end;
  justify-content: flex-end;
  gap: 6px;
  border: 1px solid #8c8c8c;
  border-left: 0;
  border-radius: 0 5px 5px 0;
  background: linear-gradient(90deg, #ededed, #fff);
}
.side-tab span {
  writing-mode: vertical-rl;
  transform: rotate(180deg);
  line-height: 16px;
  margin-right: 5px;
}
.navigator { height: 159px; padding-bottom: 1px; gap: 4px; }
.explorer { height: 138px; padding-bottom: 5px; }
.property { height: 100px; padding-bottom: 4px; }
.backlog { height: 149px; padding-bottom: 4px; }

.editor { flex: 1; display: flex; flex-direction: column; }
.crumbs { height: 37px; flex: none; display: flex; justify-content: space-between; padding: 3px 21px 0 7px; }
.crumb { display: grid; }
.crumb > * { grid-area: 1 / 1; }
.crumb span { padding-left: 10px; font-size: 16.5px; line-height: 30px; letter-spacing: 0.35px; color: #7c7e82; }
.crumb-actions { display: flex; gap: 9px; padding-top: 1px; }

.toolbar { flex: none; display: flex; align-items: center; }
.toolbar.first { height: 38px; padding: 3px 0 4px 6px; }
.toolbar.second { height: 29px; padding: 0 0 1px 5px; }
.toolbar .divider { height: 31px; width: 1px; background: #888; }
.i-doc { margin-right: 7px; }
.i-import { margin: 0 10px 0 8px; }
.i-export { margin-right: 5px; }
.i-marker { margin: 0 7px 0 14px; }
.i-aa { width: 28px; margin: 0 10px 0 8px; font: 400 27px/28px "Liberation Serif", serif; color: #4c4f55; letter-spacing: -3px; -webkit-text-stroke: 0.7px #4c4f55; }
.i-aa small { font-size: 22px; position: relative; top: 5px; }
.toggle { width: 31px; height: 31px; margin-right: 4px; padding: 2px 3px 0; background: #808080; }
.glyph { font: 400 31px/26px "Liberation Serif", serif; letter-spacing: 0; color: #222; -webkit-text-stroke: 0.4px #222; }
.bold-b { width: 21px; }
.letter-f { width: 18px; font-size: 30px; }
.drop { width: 8px; height: 5px; margin: 2px 0 0 5px; background: #666; clip-path: polygon(0 0, 100% 0, 50% 100%); }
.i-align, .i-list, .letter-f, .i-table, .i-grid, .i-eraser, .i-plus, .i-bino { margin-left: 13px; }
.i-align { margin-left: 12px; }
.letter-f { margin-left: 14px; }
.letter-f + .drop { margin-left: 7px; }
.i-eraser { position: relative; width: 22px; margin-left: 11px; margin-right: -2px; }
.i-eraser > i { font: italic 400 29px/26px "Liberation Serif", serif; letter-spacing: 0; -webkit-text-stroke: 0.5px #222; color: #222; }
.i-eraser svg { position: absolute; left: 6px; top: 10px; }

.stage { height: 844px; flex: none; display: flex; }
.palette {
  width: 43px;
  flex: none;
  padding: 12px 9px;
  display: flex;
  flex-direction: column;
  gap: 17px;
  background: #808080;
  border-top: 1px solid #fff;
}
.palette svg:last-child { margin-left: 4px; }
.stage-main { flex: 1; display: flex; flex-direction: column; border-left: 1px solid #fff; }
.canvas {
  height: 499px;
  flex: none;
  padding: 13px 75px 0 76px;
  background: #808080;
  border-top: 1px solid #666;
}
.page {
  height: 485px;
  padding: 52px 0 0 50.5px;
  background: #fff;
  border: 1px solid #000;
  border-bottom: 0;
  font: 28px/36.2px "Liberation Sans", Arial, sans-serif;
  letter-spacing: 0;
  white-space: nowrap;
}
.page p { margin: 0; height: 36.2px; }
.page u, .page mark { display: inline-block; height: 36.2px; vertical-align: top; }
.page u {
  padding: 0 3px 0 1px;
  margin: 0 -3px 0 -1px;
  text-decoration: none;
  background: url("data:image/svg+xml,%3Csvg xmlns='http://www.w3.org/2000/svg' width='4' height='3' shape-rendering='crispEdges'%3E%3Cpath d='M0 0h1v2H0zM1 1h1v2H1zM2 2h1v1H2zM3 1h1v1H3z' fill='%23f00'/%3E%3C/svg%3E") 0 32px repeat-x;
}
.page mark { background: #ff0; color: #000; padding-right: 2px; margin-right: -2px; }
.page .ls-a { letter-spacing: -0.05px; }
.page .ls-b { letter-spacing: -0.08px; }
.page .ls-c { letter-spacing: 0.09px; }
.page .ls-d { letter-spacing: 0.015px; }
.page .ls-e { letter-spacing: 0.055px; }

.splitter { height: 11px; flex: none; padding: 1px 0 0 4px; border-top: 1px solid #fff; }

/* candidate table */
.grid {
  flex: 1;
  display: flex;
  flex-direction: column;
  border: 1px solid #80848f;
  border-top: 3px solid #7b7e88;
  margin-left: 1px;
}
.row {
  height: 23.75px;
  flex: none;
  display: grid;
  grid-template-columns: 44px 256px 283px 112px 1fr;
  grid-template-rows: 100%;
  background: #fff;
  border-bottom: 1px solid #808080;
}
.row.thick { box-shadow: 0 1px 0 #808080; position: relative; }
.row span {
  border-right: 1px solid #808080;
  padding-left: 2px;
  font-size: 16.3px;
  line-height: 27px;
  letter-spacing: 0.56px;
  white-space: nowrap;
}
.row b {
  margin: 1px;
  background: #efefef;
  border: 1px solid #ccc;
  border-right: 2px solid #999;
  border-bottom: 2px solid #808080;
  box-shadow: 1px 0 0 #777;
  font-weight: 400;
  text-align: center;
  line-height: 19px;
}
.row b.wide { padding-left: 3px; }
.row .type { display: flex; align-items: center; font-size: 12px; line-height: 22px; gap: 3px; padding-left: 1px; letter-spacing: 0.3px; }
.row .type .person { margin: 0 5px; }
.row.head { height: 23px; border-bottom-color: #666; }
.row.head span {
  padding: 0;
  font-size: 12px;
  font-weight: 700;
  line-height: 21px;
  text-align: center;
  letter-spacing: 0.2px;
  background: #fdfdfd;
  border: 1px solid #ddd;
  border-right-color: #777;
  border-bottom-color: #bbb;
}
.row.head span:last-child { padding-left: 76px; }
.row span:last-child { border-right: 0; }
.scroll { margin-top: auto; height: 22px; border-top: 1px solid #fff; padding: 7px 0 0 22px; }
.scroll i { display: block; width: 1574px; height: 7px; background: #858585; }

/* status bar */
.status {
  height: 32px;
  flex: none;
  display: flex;
  align-items: center;
  justify-content: flex-end;
  gap: 22px;
  padding: 2px 26px 0 0;
  border-bottom: 3px solid #fff;
  background: linear-gradient(#fdfdfd, #eceef0);
}

/* taskbar */
.taskbar {
  height: 60px;
  flex: none;
  display: flex;
  align-items: center;
  background: #202122;
  border-top: 1px solid #4a4b4c;
  color: #fff;
  font: 14.5px/20px "Open Sans", "Noto Sans", sans-serif;
  letter-spacing: 0;
}
.widget { width: 449px; display: flex; padding-left: 26px; }
.widget-icon { position: relative; padding-top: 9px; }
.widget-text { margin: -1px 0 1px 9px; display: flex; flex-direction: column; font-size: 14px; letter-spacing: -0.2px; }
.loss { color: #ff8f9a; }
.badge {
  position: absolute;
  width: 20px;
  height: 20px;
  border-radius: 50%;
  font-size: 13px;
  line-height: 20px;
  text-align: center;
}
.badge.pink { left: 13px; top: -3px; background: #ff9aa5; color: #222; }
.badge.purple { right: 6px; top: 3px; background: #7b50b8; color: #e6dcf5; }
.badge.red { right: 4px; top: 3px; width: 19px; height: 19px; background: #f05252; letter-spacing: -0.5px; }
.start { margin-left: 26px; }
.search {
  width: 275px;
  height: 40px;
  margin-left: 17px;
  padding: 0 5px 0 15px;
  display: flex;
  align-items: center;
  border: 1px solid #5a5b5c;
  border-radius: 20px;
  background: #3f4041;
  color: #d8d8d8;
  font-size: 16px;
}
.search span { flex: 1; margin-left: 12px; }
.apps { display: flex; margin-left: 2.5px; }
.app { position: relative; width: 55px; height: 50px; display: flex; align-items: center; justify-content: center; }
.app.running::after, .app.current::after {
  content: "";
  position: absolute;
  bottom: 0;
  width: 8px;
  height: 4px;
  border-radius: 2px;
  background: #8f9091;
}
.app.current { width: 50px; margin-left: 2.5px; border: 1px solid #3b3c3d; border-radius: 5px; background: #2e2f30; }
.app.current::after { width: 20px; background: #f47c5c; }
.tray { display: flex; align-items: center; margin-left: 155px; margin-top: -1px; }
.t-cloud { margin-left: 23px; }
.t-wifi { margin-left: 20px; }
.t-sound { margin-left: 10px; }
.t-batt { margin-left: 9px; }
.clock { width: 97px; display: flex; flex-direction: column; text-align: right; letter-spacing: 0; }
.t-bell { margin-left: 11px; }
```
